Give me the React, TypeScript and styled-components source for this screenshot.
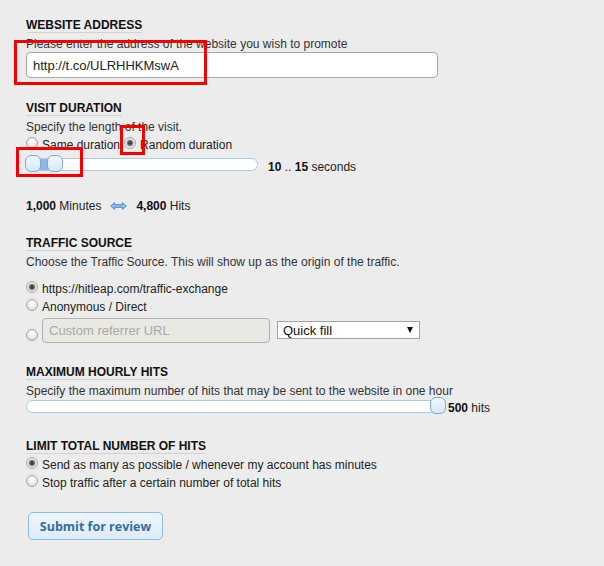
import React from 'react';
import styled, { createGlobalStyle } from 'styled-components';

const GlobalStyle = createGlobalStyle`
  html, body {
    margin: 0;
    padding: 0;
  }

  body {
    background: #ececec;
    font-family: "Liberation Sans", Arial, sans-serif;
    color: #222;
  }
`;

interface RadioProps {
  checked?: boolean;
  label: string;
}

function RadioChoice({ checked, label }: RadioProps) {
  return (
    <Choice>
      <RadioDot $checked={!!checked} />
      <span>{label}</span>
    </Choice>
  );
}

interface SliderProps {
  width: number;
  values: number[];
  min: number;
  max: number;
  shift: number;
  range?: boolean;
}

function Slider({ width, values, min, max, shift, range }: SliderProps) {
  const inner = width - 2;
  const pos = values.map((v) => ((v - min) / (max - min)) * inner - shift);

  return (
    <Track $width={width}>
      {range && values.length > 1 && (
        <RangeFill style={{ left: pos[0] + 8, width: pos[1] - pos[0] }} />
      )}
      {pos.map((left, i) => (
        <Handle key={i} style={{ left }} />
      ))}
    </Track>
  );
}

function SwapArrow() {
  return (
    <svg width='17' height='8' viewBox='0 0 17 8'>
      <path
        d='M0.6 4 L4.6 0.6 L4.6 2.6 L12.4 2.6 L12.4 0.6 L16.4 4 L12.4 7.4 L12.4 5.4 L4.6 5.4 L4.6 7.4 Z'
        fill='#8dbde8'
        stroke='#4c8acb'
        strokeWidth='0.9'
        strokeLinejoin='round'
      />
    </svg>
  );
}

function App() {
  return (
    <>
      <GlobalStyle />
      <Page>
        <Section $top={18}>
          <Heading>Website Address</Heading>
          <Hint>Please enter the address of the website you wish to promote</Hint>
          <UrlInput defaultValue='http://t.co/ULRHHKMswA' />
        </Section>

        <Section $top={23}>
          <Heading>Visit Duration</Heading>
          <Hint>Specify the length of the visit.</Hint>
          <ChoiceLine>
            <RadioChoice label='Same duration' />
            <RadioChoice checked label='Random duration' />
          </ChoiceLine>
          <SliderRow $top={4}>
            <Slider width={232} values={[10, 15]} min={10} max={62} shift={2} range />
            <SliderValue $shift={2}>
              <b>10</b> .. <b>15</b> seconds
            </SliderValue>
          </SliderRow>
          <Summary>
            <span>
              <b>1,000</b> Minutes
            </span>
            <SwapArrow />
            <span>
              <b>4,800</b> Hits
            </span>
          </Summary>
        </Section>

        <Section $top={23}>
          <Heading>Traffic Source</Heading>
          <Hint>Choose the Traffic Source. This will show up as the origin of the traffic.</Hint>
          <ChoiceList $top={11}>
            <RadioChoice checked label='https://hitleap.com/traffic-exchange' />
            <RadioChoice label='Anonymous / Direct' />
            <ReferrerRow>
              <RadioDot $checked={false} $low />
              <ReferrerInput disabled placeholder='Custom referrer URL' />
              <QuickFill>
                <span>Quick fill</span>
                <DropArrow />
              </QuickFill>
            </ReferrerRow>
          </ChoiceList>
        </Section>

        <Section $top={22.5}>
          <Heading>Maximum Hourly Hits</Heading>
          <Hint>Specify the maximum number of hits that may be sent to the website in one hour</Hint>
          <SliderRow $top={1.5}>
            <Slider width={412} values={[500]} min={0} max={500} shift={7} />
            <SliderValue $shift={1}>
              <b>500</b> hits
            </SliderValue>
          </SliderRow>
        </Section>

        <Section $top={26}>
          <Heading>Limit Total Number of Hits</Heading>
          <ChoiceList $top={2.5}>
            <RadioChoice checked label='Send as many as possible / whenever my account has minutes' />
            <RadioChoice label='Stop traffic after a certain number of total hits' />
          </ChoiceList>
          <SubmitButton type='button'>Submit for review</SubmitButton>
        </Section>

        <Marker $x={14} $y={40} $w={193} $h={45} />
        <Marker $x={120} $y={125} $w={25} $h={30} />
        <Marker $x={16} $y={147} $w={67} $h={30} />
      </Page>
    </>
  );
}

export default App;

const Page = styled.div`
  position: relative;
  width: 604px;
  min-height: 566px;
  box-sizing: border-box;
  padding: 0 0 20px 26px;
  overflow: hidden;
`;

const Section = styled.section<{ $top: number }>`
  display: flex;
  flex-direction: column;
  align-items: flex-start;
  margin-top: ${({ $top }) => $top}px;
`;

const Heading = styled.h3`
  margin: 0;
  font-size: 12px;
  line-height: 14px;
  font-weight: 700;
  color: #111;
  text-transform: uppercase;
  border-bottom: 1px solid #d2d2d2;
`;

const Hint = styled.p`
  margin: 4px 0 0;
  font-size: 12px;
  line-height: 14px;
  color: #333;
`;

const UrlInput = styled.input`
  margin-top: 1px;
  width: 412px;
  height: 26px;
  box-sizing: border-box;
  padding: 0 6px;
  border: 1px solid #a9a9a9;
  border-radius: 4px;
  background: #fff;
  font-family: "Liberation Sans", Arial, sans-serif;
  font-size: 13px;
  color: #222;
  outline: none;
`;

const ChoiceLine = styled.div`
  display: flex;
  gap: 4px;
  margin-top: 1.5px;
`;

const ChoiceList = styled.div<{ $top: number }>`
  display: flex;
  flex-direction: column;
  margin-top: ${({ $top }) => $top}px;
`;

const Choice = styled.label`
  display: flex;
  align-items: flex-start;
  gap: 4px;
  font-size: 12px;
  line-height: 18px;
  color: #222;
`;

const RadioDot = styled.span<{ $checked: boolean; $low?: boolean }>`
  flex: none;
  width: 12px;
  height: 12px;
  box-sizing: border-box;
  margin-top: 1px;
  border: 1px solid #a7a7a7;
  border-radius: 50%;
  background: ${({ $checked }) =>
    $checked
      ? 'radial-gradient(circle at center, #3e3e3e 0, #4a4a4a 1.6px, #8e8e8e 2.8px, #e2e2e2 3.8px, #f6f6f6 6px)'
      : 'radial-gradient(circle at 50% 35%, #ffffff 0, #f1f1f1 3px, #dcdcdc 6px)'};
  ${({ $low }) => $low && 'align-self: flex-end; margin: 0 0 2px;'}
`;

const SliderRow = styled.div<{ $top: number }>`
  display: flex;
  align-items: flex-start;
  height: 13px;
  margin-top: ${({ $top }) => $top}px;
`;

const Track = styled.div<{ $width: number }>`
  position: relative;
  flex: none;
  width: ${({ $width }) => $width}px;
  height: 13px;
  box-sizing: border-box;
  border: 1px solid #a9cbe7;
  border-radius: 7px;
  background: #fff;
`;

const RangeFill = styled.div`
  position: absolute;
  top: 0;
  bottom: 0;
  background: #8db8df;
`;

const Handle = styled.span`
  position: absolute;
  top: -4px;
  width: 16px;
  height: 17px;
  box-sizing: border-box;
  border: 1px solid #7eaad4;
  border-radius: 6px;
  background: linear-gradient(#f0f7fe, #d9e9f8);
`;

const SliderValue = styled.span<{ $shift: number }>`
  margin-left: 10px;
  padding-top: ${({ $shift }) => $shift}px;
  font-size: 12px;
  line-height: 14px;
  color: #222;
  white-space: nowrap;

  & b {
    color: #111;
  }
`;

const Summary = styled.div`
  display: flex;
  align-items: center;
  gap: 9px;
  margin-top: 28.5px;
  font-size: 12px;
  line-height: 14px;
  color: #222;

  & b {
    color: #111;
  }
`;

const ReferrerRow = styled.div`
  display: flex;
  align-items: center;
  gap: 4px;
  margin-top: 1.5px;
  height: 25px;
`;

const ReferrerInput = styled.input`
  width: 228px;
  height: 25px;
  box-sizing: border-box;
  padding: 0 6px;
  border: 1px solid #b2b2b2;
  border-radius: 4px;
  background: #e9e8e3;
  font-family: "Liberation Sans", Arial, sans-serif;
  font-size: 13px;

  &::placeholder {
    color: #a8a8a8;
  }
`;

const QuickFill = styled.div`
  margin-left: 3px;
  display: flex;
  align-items: center;
  justify-content: space-between;
  width: 143px;
  height: 18px;
  box-sizing: border-box;
  padding: 0 6px 0 5px;
  border: 1px solid #a3a3a3;
  background: #fff;
  font-size: 13px;
  color: #111;
`;

const DropArrow = styled.span`
  width: 0;
  height: 0;
  border-left: 3.5px solid transparent;
  border-right: 3.5px solid transparent;
  border-top: 6px solid #111;
`;

const SubmitButton = styled.button`
  margin: 20px 0 0 2px;
  width: 135px;
  height: 28px;
  padding: 0;
  border: 1px solid #8ebbe2;
  border-radius: 5px;
  background: linear-gradient(#eef6fd, #dcebf9);
  font-family: "Open Sans", "DejaVu Sans", sans-serif;
  font-size: 12.5px;
  font-weight: 700;
  color: #336d9e;
  cursor: pointer;
`;

const Marker = styled.div<{ $x: number; $y: number; $w: number; $h: number }>`
  position: absolute;
  left: ${({ $x }) => $x}px;
  top: ${({ $y }) => $y}px;
  width: ${({ $w }) => $w}px;
  height: ${({ $h }) => $h}px;
  box-sizing: border-box;
  border: 3px solid #f40000;
  pointer-events: none;
`;
